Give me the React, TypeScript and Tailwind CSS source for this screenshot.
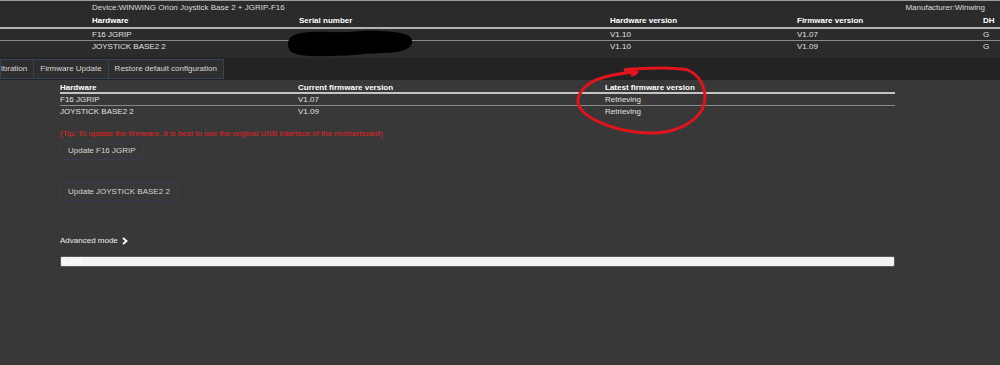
import React from 'react';

// ─── Data ─────────────────────────────────────────────────────────────────────

const DEVICES = [
  { name: 'F16 JGRIP', hw: 'V1.10', fw: 'V1.07', dh: 'G' },
  { name: 'JOYSTICK BASE2 2', hw: 'V1.10', fw: 'V1.09', dh: 'G' },
];

const TABS = ['ibration', 'Firmware Update', 'Restore default configuration'];

const font = { fontFamily: '"Liberation Sans", Arial, sans-serif' };

// ─── Component ───────────────────────────────────────────────────────────────

const App: React.FC = () => {
  return (
    <div className="relative w-[1000px] h-[365px] flex flex-col overflow-hidden text-[8px] leading-none bg-[#383838]" style={font}>
      {/* Device info */}
      <div className="bg-[#2b2b2b] border-t border-[#9a9a9a] pb-[5px]">
        <div className="flex justify-between items-center h-[14px] pl-[92px] pr-[15px] text-[#dcdcdc]">
          <span>Device:WINWING Orion Joystick Base 2 + JGRIP-F16</span>
          <span>Manufacturer:Winwing</span>
        </div>
        <div className="grid grid-cols-[207px_311px_187px_186px_1fr] pl-[92px] h-[14px] items-end pb-[2px] font-bold text-white border-b-2 border-[#b4b4b4]">
          <span>Hardware</span>
          <span>Serial number</span>
          <span>Hardware version</span>
          <span>Firmware version</span>
          <span>DH</span>
        </div>
        {DEVICES.map((d, i) => (
          <div
            key={d.name}
            className={`grid grid-cols-[207px_311px_187px_186px_1fr] pl-[92px] h-[12px] items-center text-[#e0e0e0] ${
              i === 0 ? 'border-b border-[#8a8a8a]' : ''
            }`}
          >
            <span>{d.name}</span>
            <span></span>
            <span>{d.hw}</span>
            <span>{d.fw}</span>
            <span>{d.dh}</span>
          </div>
        ))}
      </div>

      {/* Tabs */}
      <div className="bg-[#232323] h-[22px] flex items-end pb-[1px]">
        <div className="flex h-[20px] border border-[#34405c] bg-[#2e2e2e] text-[#d8d8d8]">
          {TABS.map((t, i) => (
            <div
              key={t}
              className={`flex items-center h-full ${i === 0 ? 'pr-[6px]' : 'px-[6px]'} ${
                i < TABS.length - 1 ? 'border-r border-[#34405c]' : ''
              }`}
            >
              {t}
            </div>
          ))}
        </div>
      </div>

      {/* Firmware panel */}
      <div className="flex-1 pl-[60px] pt-[4px]">
        <div className="w-[835px]">
          <div className="grid grid-cols-[238px_307px_1fr] h-[10px] items-center font-bold text-white border-b-2 border-[#c4c4c4]">
            <span>Hardware</span>
            <span>Current firmware version</span>
            <span>Latest firmware version</span>
          </div>
          {DEVICES.map((d, i) => (
            <div
              key={d.name}
              className={`grid grid-cols-[238px_307px_1fr] h-[12px] items-center text-[#e0e0e0] ${
                i === 0 ? 'border-b border-[#8a8a8a]' : ''
              }`}
            >
              <span>{d.name}</span>
              <span>{d.fw}</span>
              <span>Retrieving</span>
            </div>
          ))}
        </div>

        <p className="mt-[12px] text-[#e02222]">
          (Tip: To update the firmware, it is best to use the original USB interface of the motherboard)
        </p>

        <button className="mt-[3px] block h-[19px] px-[7px] border border-[#373d4e] rounded-[2px] text-[#d4d4d4]" style={font}>
          Update F16 JGRIP
        </button>
        <button className="mt-[22px] block h-[19px] px-[7px] border border-[#373d4e] rounded-[2px] text-[#d4d4d4]" style={font}>
          Update JOYSTICK BASE2 2
        </button>

        <div className="mt-[36px] flex items-center gap-[4px] text-[#ececec]">
          <span>Advanced mode</span>
          <svg width="6" height="8" viewBox="0 0 6 8">
            <path d="M1 1 L4.5 4 L1 7" fill="none" stroke="#ffffff" strokeWidth="1.8" />
          </svg>
        </div>

        <div className="mt-[11px] w-[835px] h-[11px] rounded-[2px] bg-[#f3f3f3] border border-[#5a5a5a] flex items-center pl-[2px] text-white text-[7px]">
          0.00%
        </div>
      </div>

      {/* Annotations drawn over the screenshot */}
      <svg className="absolute inset-0 pointer-events-none" width="1000" height="365" viewBox="0 0 1000 365">
        <path
          d="M288 44 C288 34, 300 31, 330 32 C350 33, 360 30, 380 31 C400 32, 413 34, 412 42 C411 50, 400 53, 380 53 C360 54, 340 57, 310 56 C294 55, 288 52, 288 44 Z"
          fill="#000000"
        />
        <path
          d="M632 75 C642 72, 636 67, 624 70 C645 68, 670 67, 688 70 C703 77, 709 95, 702 110 C692 126, 670 134, 648 133 C620 132, 590 122, 580 108 C573 96, 585 82, 605 77 C615 74, 624 73, 634 72"
          fill="none"
          stroke="#e0141a"
          strokeWidth="3"
          strokeLinecap="round"
        />
      </svg>
    </div>
  );
};

export default App;
